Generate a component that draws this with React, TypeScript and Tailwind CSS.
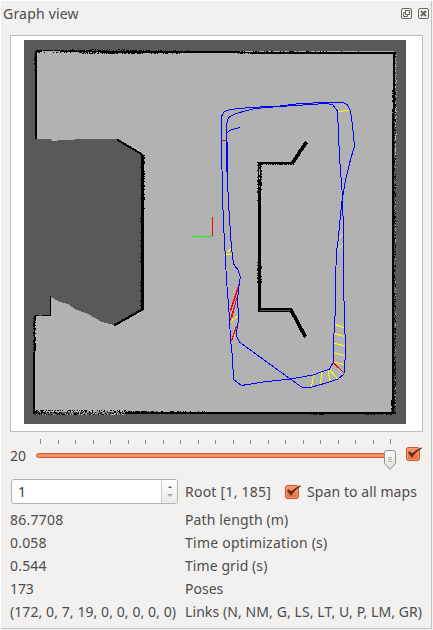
import React from "react";

type Band = { x: number; y: number; w: number; h: number; density: number; seed: number };

// Deterministic scatter of single cells, as left by range-sensor noise along a wall.
function speckle({ x, y, w, h, density, seed }: Band): string {
  let s = seed * 7919;
  let d = "";
  for (let j = 0; j < h; j++) {
    for (let i = 0; i < w; i++) {
      s = (s * 1103515 + 12345) % 2147483648;
      if (s / 2147483648 < density) d += `M${x + i} ${y + j}h1v1h-1z`;
    }
  }
  return d;
}

const BLACK: Band[] = [
  { x: 37, y: 50, w: 48, h: 1, density: 0.7, seed: 3 },
  { x: 38, y: 52, w: 60, h: 1, density: 0.35, seed: 5 },
  { x: 70, y: 49, w: 60, h: 1, density: 0.2, seed: 7 },
  { x: 80, y: 50, w: 60, h: 4, density: 0.55, seed: 11 },
  { x: 125, y: 50, w: 65, h: 1, density: 0.25, seed: 13 },
  { x: 140, y: 53, w: 50, h: 1, density: 0.2, seed: 17 },
  { x: 235, y: 51, w: 125, h: 1, density: 0.3, seed: 19 },
  { x: 236, y: 53, w: 30, h: 1, density: 0.4, seed: 21 },
  { x: 34, y: 53, w: 1, h: 20, density: 0.5, seed: 23 },
  { x: 33, y: 318, w: 1, h: 34, density: 0.5, seed: 29 },
  { x: 35, y: 316, w: 1, h: 35, density: 0.6, seed: 31 },
  { x: 35, y: 410, w: 92, h: 5, density: 0.4, seed: 37 },
  { x: 115, y: 411, w: 75, h: 3, density: 0.5, seed: 41 },
  { x: 180, y: 411, w: 40, h: 1, density: 0.2, seed: 43 },
  { x: 365, y: 414, w: 28, h: 1, density: 0.5, seed: 47 },
  { x: 310, y: 414, w: 14, h: 1, density: 0.5, seed: 49 },
  { x: 394, y: 54, w: 2, h: 360, density: 0.4, seed: 53 },
  { x: 392, y: 90, w: 1, h: 30, density: 0.5, seed: 59 },
  { x: 391, y: 400, w: 3, h: 13, density: 0.5, seed: 61 },
  { x: 140, y: 160, w: 1, h: 148, density: 0.12, seed: 67 },
  { x: 144, y: 154, w: 1, h: 55, density: 0.3, seed: 71 },
  { x: 257, y: 162, w: 1, h: 50, density: 0.2, seed: 73 },
  { x: 261, y: 165, w: 1, h: 25, density: 0.4, seed: 79 },
  { x: 261, y: 262, w: 1, h: 22, density: 0.5, seed: 83 },
  { x: 257, y: 262, w: 1, h: 22, density: 0.5, seed: 89 },
  { x: 260, y: 164, w: 34, h: 1, density: 0.5, seed: 97 },
];

const LIGHT: Band[] = [
  { x: 395, y: 55, w: 1, h: 110, density: 0.4, seed: 101 },
  { x: 396, y: 55, w: 1, h: 90, density: 0.15, seed: 102 },
  { x: 395, y: 165, w: 1, h: 240, density: 0.12, seed: 103 },
  { x: 259, y: 164, w: 1, h: 26, density: 0.4, seed: 107 },
  { x: 40, y: 411, w: 85, h: 4, density: 0.2, seed: 109 },
];

const blackCells = BLACK.map(speckle).join("");
const lightCells = LIGHT.map(speckle).join("");

function OccupancyMap() {
  return (
    <svg width="382" height="384" viewBox="24 40 382 384" shapeRendering="crispEdges" className="block" fill="none">
      <rect x="24" y="40" width="382" height="384" fill="#595959" />
      <path
        d="M37 51H394V412H35V316H51V297L60 302L68 304L75 309L88 314L102 322L114 325L143 309V155L117 139H75L74 140H58L57 141H52L50 139H37Z"
        fill="#b2b2b2"
      />
      <g fill="#000">
        <path d="M35 51h2v88h-2zM36 50h6v2h-6zM80 51h60v1h-60zM60 51h30v1h-30zM100 51h100v2h-100zM140 51h40v1h-40z" />
        <path d="M180 51H240V53H180zM236 52h160v1h-160z" />
        <path d="M250 52h146v2h-146z" />
        <path d="M393 53h2v60h-2zM392 113h2v301h-2z" />
        <path d="M34 316h1v98h-1zM34 340h1v74h-1zM33 352h2v62h-2zM35 315h4v1h-4zM42 315h8v1h-8zM50 296h1v20h-1z" />
        <path d="M125 412h269v2h-269z" />
        <path d="M141 155h3v155h-3z" />
        <path d="M258 162h3v150h-3zM260 162h33v2h-33zM259 308h33v4h-33z" />
        <path d={blackCells} />
      </g>
      <g stroke="#000">
        <path d="M117 139.5L143 155" strokeWidth="2" />
        <path d="M114 325.5L143 309" strokeWidth="2.2" />
        <path d="M292.5 163L300 151.5L306.5 142" strokeWidth="3.6" />
        <path d="M291 310L305.5 337" strokeWidth="3.6" />
      </g>
      <path d="M260 310.5H290" stroke="#555" />
      <path d={lightCells} fill="#b2b2b2" />

      <g stroke="#ff0">
        <path d="M338 111.5L349 110.5" />
        <path d="M342.5 234.5L338 239.5M342.5 244.5L337.5 249.5" />
        <path d="M231.5 247.5L225.5 255L232 254.5" />
        <path d="M238 316L230.5 321.5M235 334L231.5 341" />
        <path d="M335 324.5L344 327.5M334.5 333.5L344.5 336.5M333.5 343L345 346M333 352.5L345 355.5M333 362L344.5 364.5" />
        <path d="M329.5 369.5L337.5 379M328.5 369.5L329.5 381.5M321.5 372.5L320.5 385M313.5 375L311.5 387.5" />
      </g>
      <g stroke="#f00">
        <path d="M240 281L230 311M238 295L230 321M236.5 299L232 317M236.5 326L231.5 341" />
        <path d="M239.500 284L231 310" />
        <path d="M333 362.5L344 373" />
        <path d="M222 140.5H225.5" />
      </g>
      <g stroke="#00f" strokeWidth="1">
        <path d="M221.5 130V116.5L224 112L230 109.5L250 107.5L280 106L300 103.5L326 102.5H343L347.5 105L350.5 111L352.5 125L354.5 146.5L350.5 159.5L345.5 180L343.5 192L342 201.5L340.5 215L338.5 237L336.5 252L335.5 280V308L333.5 342V362L329 369.5L321 372L313 375L290.5 379L263 382L241.5 385.5L233.5 379.5L232.5 357L230.5 340L229.5 318L226.5 280L225.5 260L224 233L223 210L222 170L221.5 130" />
        <path d="M240 127.5L231.5 129.5L226.5 133L226.5 125L228.5 117.5L236 113.5L254.5 108.5L280 106.5L326 103.5L332.5 104.5L337.5 111L339.5 157L340.5 170L342.5 197L343.5 233L343.5 280L344.5 320L345.5 347L344.5 373.5L338 379L321 384.5L310 387.5L301.5 387L280 371.5L240 342.5L236 335L238 323L238.5 315L237.5 300L239.5 282L240.5 277L238 270L233.5 264L231.5 248L229.5 218L228.5 203L227.5 180L226.5 147V130" />
        <path d="M227.5 142V192M226.5 140V172" />
      </g>
      <rect x="193" y="236" width="20" height="1" fill="#0f0" />
      <rect x="212" y="217" width="1" height="19" fill="#f00" />
    </svg>
  );
}

function Check() {
  return (
    <svg width="18" height="17" viewBox="0 0 18 17" className="block shrink-0" fill="none">
      <defs>
        <linearGradient id="box" x1="0" y1="0" x2="0" y2="1">
          <stop offset="0" stopColor="#f7966f" />
          <stop offset="1" stopColor="#ee6a3c" />
        </linearGradient>
      </defs>
      <rect x="1.5" y="2.5" width="13" height="13" rx="2" fill="url(#box)" stroke="#c4532c" />
      <rect x="2.5" y="3.5" width="11" height="11" rx="1" stroke="#f9a888" strokeOpacity=".7" />
      <path d="M3.5 7.5L7 12Q10.500 6 16.500 3Q10.500 5.500 7 9.300L5 7Z" fill="#5a3023" stroke="#5a3023" strokeWidth="1.100" strokeLinejoin="round" />
    </svg>
  );
}

function DockButtons() {
  return (
    <div className="flex gap-[6px]">
      <svg width="11" height="11" viewBox="0 0 11 11" fill="none" stroke="#6b6965" className="block">
        <rect x=".5" y=".5" width="10" height="10" rx="1.500" />
        <rect x="4.500" y="2.500" width="4" height="4" />
        <path d="M4 4.500H2.500V8.500H6.500V7" />
      </svg>
      <svg width="11" height="11" viewBox="0 0 11 11" fill="none" stroke="#6b6965" className="block">
        <rect x=".5" y=".5" width="10" height="10" rx="1.500" />
        <path d="M3 3L8 8M8 3L3 8" strokeWidth="2" />
      </svg>
    </div>
  );
}

const TICKS = Array.from({ length: 21 }, (_, i) => Math.round(4 + i * 17.5));

function Slider() {
  return (
    <svg width="362" height="36" viewBox="0 0 362 36" className="block shrink-0" fill="none">
      <defs>
        <linearGradient id="knob" x1="0" y1="0" x2="0" y2="1">
          <stop offset="0" stopColor="#fff" />
          <stop offset="1" stopColor="#deddda" />
        </linearGradient>
      </defs>
      {TICKS.map((x, i) => (
        <rect key={x} x={x} y={i % 20 === 0 ? 3 : 4} width="1" height={i % 20 === 0 ? 5 : 4} fill="#8d8b88" />
      ))}
      <rect x=".5" y="17.500" width="356" height="4" rx="2" fill="#f58a61" stroke="#d15f36" />
      <path d="M2 19.500H354" stroke="#f69a76" />
      <path d="M348.500 17Q348.500 14.500 351 14.500H357Q359.500 14.500 359.500 17V27.500L354 33.500L348.500 27.500Z" fill="url(#knob)" stroke="#96938f" />
      <path d="M352 21.500H356M352 23.500H356M352 25.500H356" stroke="#b4b2ae" />
    </svg>
  );
}

const ROWS = [
  { value: "86.7708", valueClass: "tracking-[0.25px]", label: "Path length (m)", labelClass: "tracking-[0.14px]" },
  { value: "0.058", valueClass: "tracking-[0.2px]", label: "Time optimization (s)", labelClass: "tracking-[0.24px]" },
  { value: "0.544", valueClass: "tracking-[0.2px]", label: "Time grid (s)", labelClass: "tracking-[0.08px]" },
  { value: "173", valueClass: "tracking-[-0.1px]", label: "Poses", labelClass: "tracking-[0px]" },
  {
    value: "(172, 0, 7, 19, 0, 0, 0, 0, 0)",
    valueClass: "tracking-[0.08px]",
    label: "Links (N, NM, G, LS, LT, U, P, LM, GR)",
    labelClass: "tracking-[0.09px]",
  },
];

export default function App() {
  return (
    <div className="flex h-[630px] w-[433px] flex-col overflow-hidden whitespace-nowrap border-l border-t border-white bg-[#f2f1f0] font-['Noto_Sans',sans-serif] text-[14px] leading-[23px] text-[#4c4c4c]">
      <div className="flex h-[628px] w-[431px] flex-col border-b border-r border-[#c3c3c3]">
        <header className="flex h-[34px] items-start justify-between pl-[2px] pr-[2px] pt-[1px]">
          <span className="tracking-[0.2px]">Graph view</span>
          <div className="pt-[6px]">
            <DockButtons />
          </div>
        </header>

        <div className="ml-[9px] h-[397px] w-[413px] shrink-0 border border-[#bebdbb] bg-white pl-[13px] pt-[4px]">
          <OccupancyMap />
        </div>

        <div className="flex h-[44px] shrink-0 items-start pl-[9px] pt-[4px]">
          <span className="w-[26px] pt-[8px]">20</span>
          <Slider />
          <div className="pl-[7px] pt-[9px]">
            <Check />
          </div>
        </div>

        <div className="flex h-[30px] shrink-0 items-center pl-[10px]">
          <div className="flex h-[25px] w-[167px] overflow-hidden rounded-[3px] border border-[#b4b2ae] bg-white">
            <span className="flex-1 pl-[6px] text-[#3c3c3c]">1</span>
            <div className="flex w-[16px] flex-col items-center justify-around border-l border-[#cfcdca] bg-gradient-to-b from-white to-[#ebeae8] py-[3px]">
              <span className="border-x-2 border-b-2 border-x-transparent border-b-[#5c5b59]" />
              <span className="border-x-[3px] border-t-[3px] border-x-transparent border-t-[#a9a7a4]" />
            </div>
          </div>
          <span className="w-[99px] pl-[7px] tracking-[0.24px]">Root [1, 185]</span>
          <span className="pl-[7px]">
            <Check />
          </span>
          <span className="pl-[5px] tracking-[0.09px]">Span to all maps</span>
        </div>

        <div className="flex flex-col pl-[9px] pt-[2px]">
          {ROWS.map((r) => (
            <div key={r.label} className="flex h-[23px]">
              <span className={"w-[175px] " + r.valueClass}>{r.value}</span>
              <span className={r.labelClass}>{r.label}</span>
            </div>
          ))}
        </div>
      </div>
    </div>
  );
}
